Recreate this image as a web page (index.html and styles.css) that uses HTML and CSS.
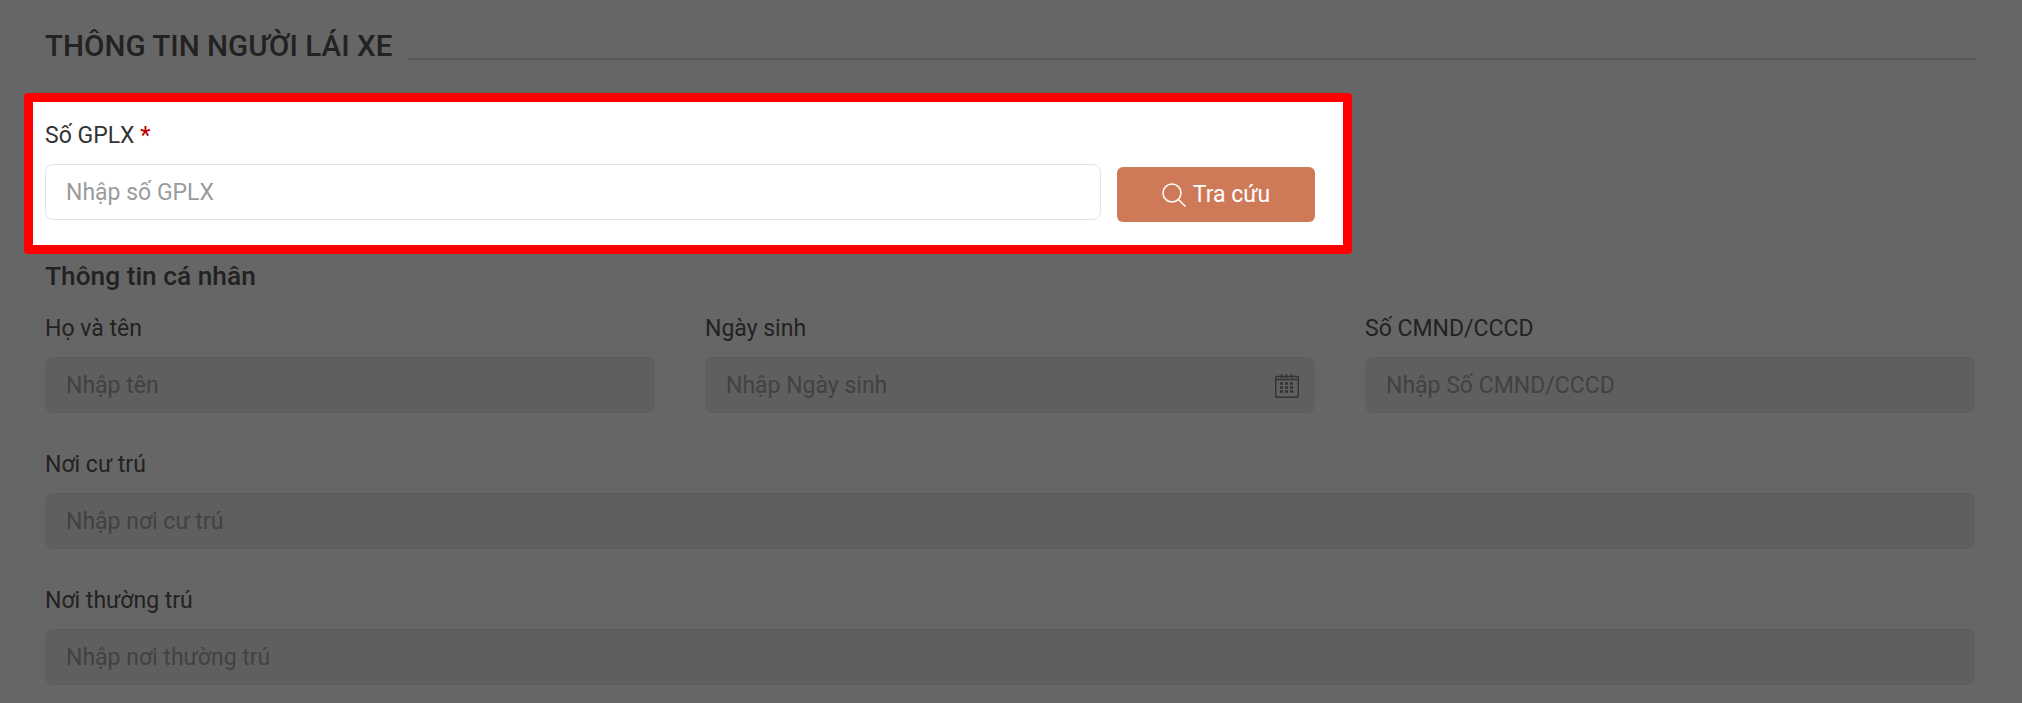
FILE: index.html
```html
<!DOCTYPE html>
<html lang="vi">
<head>
    <meta charset="UTF-8">
    <title>Thông tin người lái xe</title>
    <link rel="stylesheet" href="styles.css">
</head>
<body>
    <div class="title-row">
        <h1>THÔNG TIN NGƯỜI LÁI XE</h1>
        <div class="title-line"></div>
    </div>

    <div class="lookup">
        <label class="lookup-label">Số GPLX <span class="required">*</span></label>
        <div class="lookup-row">
            <input class="lookup-input" type="text" placeholder="Nhập số GPLX">
            <button class="lookup-button">
                <svg class="search-icon" viewBox="0 0 24 24" fill="none" stroke="#fff" stroke-width="1.5">
                    <circle cx="10" cy="10" r="9"/>
                    <path d="M16.5 16.5l7 7"/>
                </svg>
                Tra cứu
            </button>
        </div>
    </div>

    <h2>Thông tin cá nhân</h2>

    <div class="three-cols">
        <div class="field">
            <label>Họ và tên</label>
            <input type="text" placeholder="Nhập tên" disabled>
        </div>
        <div class="field">
            <label>Ngày sinh</label>
            <div class="date-wrap">
                <input type="text" placeholder="Nhập Ngày sinh" disabled>
                <svg class="calendar-icon" viewBox="0 0 24 24" fill="none" stroke="#333" stroke-width="1.4">
                    <rect x="0.7" y="2.5" width="22.6" height="20.8" rx="1"/>
                    <path d="M1 5.5h22M6.5 0v4M11.5 0v4M16.5 0v4"/>
                    <path stroke-width="2.5" stroke-dasharray="3 2" d="M5 9.5h13M5 13.5h13M5 17.5h13"/>
                </svg>
            </div>
        </div>
        <div class="field">
            <label>Số CMND/CCCD</label>
            <input type="text" placeholder="Nhập Số CMND/CCCD" disabled>
        </div>
    </div>

    <div class="field">
        <label>Nơi cư trú</label>
        <input type="text" placeholder="Nhập nơi cư trú" disabled>
    </div>

    <div class="field">
        <label>Nơi thường trú</label>
        <input type="text" placeholder="Nhập nơi thường trú" disabled>
    </div>
</body>
</html>
```

FILE: styles.css
```css
* {
    box-sizing: border-box;
    margin: 0;
    padding: 0;
}

html, body {
    height: 703px;
    overflow: hidden;
}

body {
    font-family: Roboto, "Liberation Sans", sans-serif;
    font-size: 23px;
    background-color: #666;
    color: #222;
    padding: 28px 47px 0 45px;
}

.title-row {
    display: flex;
    align-items: flex-end;
    gap: 16px;
    height: 32px;
}

h1 {
    font-size: 29.6px;
    font-weight: 500;
    line-height: 34px;
    margin-bottom: -3px;
    white-space: nowrap;
}

.title-line {
    flex: 1;
    height: 2px;
    background-color: #575757;
}

.lookup {
    width: 1328px;
    margin: 33px 0 0 -21px;
    padding: 22px 28px 25px 12px;
    background-color: #fff;
    border: 9px solid #f00;
    border-radius: 4px;
}

.lookup-label {
    display: block;
    line-height: 24px;
    margin-bottom: 16px;
    color: #333;
}

.required {
    color: #c00000;
    font-weight: 500;
}

.lookup-row {
    display: flex;
    gap: 16px;
    height: 56px;
}

.lookup-input {
    flex: 1;
    height: 56px;
    background-color: #fff;
    border: 1px solid #e2e2e2;
}

.lookup-input::placeholder {
    color: #9b9b9b;
}

.lookup-button {
    flex: none;
    width: 198px;
    height: 55px;
    margin-top: 3px;
    display: flex;
    align-items: center;
    justify-content: center;
    gap: 7px;
    font: inherit;
    color: #fff;
    background-color: #ce7a59;
    border: none;
    border-radius: 6px;
}

.search-icon {
    width: 24px;
    height: 24px;
}

h2 {
    font-size: 26.3px;
    font-weight: 500;
    line-height: 32px;
    margin-top: 6px;
}

.three-cols {
    display: grid;
    grid-template-columns: repeat(3, 1fr);
    gap: 50px;
    margin-top: 25px;
    margin-bottom: 40px;
}

.field {
    margin-bottom: 40px;
}

.field:last-child {
    margin-bottom: 0;
}

.three-cols .field {
    margin-bottom: 0;
}

.field label {
    display: block;
    line-height: 24px;
    margin-bottom: 16px;
}

input {
    width: 100%;
    height: 56px;
    padding: 1px 20px 0;
    font: inherit;
    border-radius: 8px;
    outline: none;
}

input:disabled {
    background-color: #5f5f5f;
    border: 1px solid #5c5c5c;
}

input:disabled::placeholder {
    color: #424242;
    opacity: 1;
}

.date-wrap {
    position: relative;
}

.calendar-icon {
    position: absolute;
    top: 17px;
    right: 16px;
    width: 24px;
    height: 24px;
}
```
